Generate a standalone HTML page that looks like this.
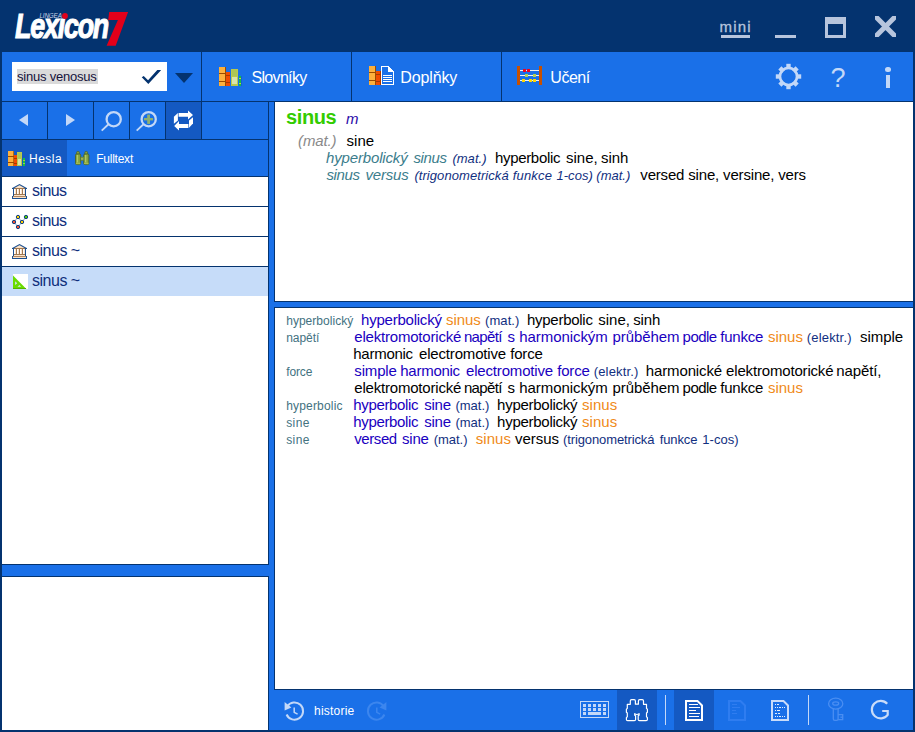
<!DOCTYPE html>
<html>
<head>
<meta charset="utf-8">
<title>Lingea Lexicon 7</title>
<style>
html,body{margin:0;padding:0;}
body{width:915px;height:732px;background:#04336f;position:relative;overflow:hidden;font-family:"Liberation Sans",sans-serif;}
.a{position:absolute;}
.blue{background:#1a70e8;}
.navy{background:#04336f;}
.white{background:#fff;}
.act{background:#1459c2;}
.t{position:absolute;white-space:nowrap;line-height:1;}
svg{position:absolute;overflow:visible;}
/* content text */
.ln{position:absolute;white-space:nowrap;font-size:15px;line-height:17px;height:17px;color:#000;}
.ln span{position:absolute;top:0;white-space:nowrap;}
.teal{color:#3b7d8c;font-style:italic;}
.dbi{color:#1f3d8f;font-style:italic;font-size:13px;}
.gri{color:#8a8a8a;font-style:italic;}
.lab{color:#4e7c8e;font-size:12px;}
.bl{color:#1a12b4;}
.or{color:#f08a18;}
.db{color:#1f3d8f;font-size:13px;}
</style>
</head>
<body>

<!-- ===== main blue surfaces ===== -->
<div class="a blue" style="left:2px;top:52px;width:911px;height:49px;"></div>
<div class="a blue" style="left:2px;top:102px;width:266px;height:37px;"></div>
<div class="a blue" style="left:2px;top:140px;width:266px;height:36px;"></div>
<div class="a blue" style="left:269px;top:102px;width:5px;height:628px;"></div>
<div class="a blue" style="left:2px;top:565px;width:270px;height:11px;"></div>
<div class="a blue" style="left:269px;top:302px;width:644px;height:5px;"></div>
<div class="a blue" style="left:269px;top:690px;width:644px;height:40px;"></div>

<!-- white panels -->
<div class="a white" style="left:2px;top:177px;width:266px;height:387px;"></div>
<div class="a white" style="left:2px;top:577px;width:266px;height:153px;"></div>
<div class="a white" style="left:275px;top:102px;width:638px;height:199px;"></div>
<div class="a white" style="left:275px;top:308px;width:638px;height:381px;"></div>

<!-- ===== title bar ===== -->
<div id="logo" class="t" style="left:15px;top:8.5px;font-size:35.5px;font-weight:bold;font-style:italic;color:#fff;letter-spacing:-1.6px;-webkit-text-stroke:1.1px #fff;transform:scaleX(0.757);transform-origin:0 0;">Lex&#305;con</div>
<svg style="left:0;top:0;" width="140" height="52">
  <polygon points="109.2,12 128.1,12 115.7,45.8 106.6,45.8 117.9,20 108.2,20" fill="#e2001a"/>
  <circle cx="65" cy="16" r="2.9" fill="#e2001a"/>
</svg>
<div class="t" style="left:39.5px;top:13px;font-size:6.3px;font-style:italic;color:#c8d2e6;letter-spacing:-0.15px;">LINGEA</div>

<div class="a" style="left:721px;top:35px;width:29px;height:3px;background:#b7c5dd;"></div>
<div class="a" style="left:775px;top:35px;width:21px;height:3px;background:#b7c5dd;"></div>
<div class="a" style="left:825px;top:17px;width:15px;height:11px;border:3px solid #b7c5dd;border-top-width:7px;"></div>
<svg style="left:875px;top:16px;overflow:hidden;" width="21" height="21" viewBox="0 0 21 21">
  <path d="M-3 -3 L24 24 M24 -3 L-3 24" stroke="#b7c5dd" stroke-width="5.1" fill="none"/>
</svg>

<!-- ===== toolbar row 1 ===== -->
<div class="a white" style="left:12px;top:62px;width:155px;height:29px;"></div>
<div class="a" style="left:17px;top:69px;width:81px;height:15px;background:#dadada;"></div>
<svg style="left:0;top:0;" width="170" height="100">
  <polygon points="141.75,77.3 148.3,84.1 161,70.3 160.8,69.9 157.3,69.9 148.05,80.2 143.7,76.05" fill="#04336f"/>
</svg>
<svg style="left:175px;top:73px;" width="18" height="10"><polygon points="0,0 18,0 9,10" fill="#04336f"/></svg>

<div class="a navy" style="left:201px;top:52px;width:1px;height:87px;"></div>
<div class="a navy" style="left:351px;top:52px;width:1px;height:49px;"></div>
<div class="a navy" style="left:501px;top:52px;width:1px;height:49px;"></div>
<div class="a navy" style="left:2px;top:101px;width:911px;height:1px;"></div>

<!-- Slovniky icon -->
<svg style="left:219px;top:66px;" width="24" height="21" shape-rendering="crispEdges">
  <rect x="0" y="1" width="7" height="19" fill="#fdb03c"/>
  <rect x="6" y="1" width="1" height="19" fill="#9b4a00"/>
  <rect x="0" y="7" width="7" height="1" fill="#9b4a00"/>
  <rect x="0" y="15" width="7" height="1" fill="#9b4a00"/>
  <rect x="7" y="6" width="4" height="14" fill="#f04c00"/>
  <rect x="7" y="9" width="4" height="1" fill="#a83800"/>
  <rect x="7" y="16" width="4" height="1" fill="#a83800"/>
  <rect x="12" y="3" width="7" height="17" fill="#b9c94c"/>
  <rect x="13" y="4" width="5" height="6" fill="#acc655"/>
  <rect x="13" y="11" width="5" height="7" fill="#d8e3ad"/>
  <rect x="20" y="10" width="2" height="10" fill="#12c046"/>
  <rect x="20" y="12" width="2" height="1" fill="#c8d040"/>
  <rect x="20" y="17" width="2" height="1" fill="#c8d040"/>
  <rect x="22" y="10" width="1" height="10" fill="#1560d8"/>
</svg>

<!-- Doplnky icon -->
<svg style="left:369px;top:66px;" width="26" height="20" shape-rendering="crispEdges">
  <rect x="0" y="0" width="7" height="19" fill="#fdb03c"/>
  <rect x="6" y="0" width="1" height="19" fill="#9b4a00"/>
  <rect x="0" y="6" width="7" height="1" fill="#9b4a00"/>
  <rect x="0" y="14" width="7" height="1" fill="#9b4a00"/>
  <rect x="7" y="5" width="5" height="14" fill="#f04c00"/>
  <rect x="7" y="8" width="5" height="1" fill="#a83800"/>
  <rect x="7" y="15" width="5" height="1" fill="#a83800"/>
  <rect x="11" y="5" width="1" height="14" fill="#a83800"/>
  <polygon points="12,0 19.5,0 25,5.5 25,19 12,19" fill="#fff"/>
  <polygon points="13,1 19,1 19,6 24,6 24,18 13,18" fill="#1a70e8"/>
  <rect x="14" y="9" width="9" height="1" fill="#fff"/>
  <rect x="14" y="11" width="9" height="1" fill="#fff"/>
  <rect x="14" y="13" width="9" height="1" fill="#fff"/>
  <rect x="14" y="15" width="9" height="1" fill="#fff"/>
</svg>

<!-- Uceni icon -->
<svg style="left:517px;top:66px;" width="26" height="20" shape-rendering="crispEdges">
  <rect x="3" y="4" width="19" height="1" fill="#f2f2f2"/>
  <rect x="3" y="9" width="19" height="1" fill="#f2f2f2"/>
  <rect x="3" y="14" width="19" height="1" fill="#f2f2f2"/>
  <rect x="0" y="0" width="3" height="19" fill="#c85000"/>
  <rect x="22" y="0" width="3" height="19" fill="#c85000"/>
  <rect x="6" y="3" width="3" height="3" fill="#f00020"/>
  <rect x="10" y="3" width="3" height="3" fill="#f00020"/>
  <rect x="8" y="8" width="3" height="3" fill="#b2d050"/>
  <rect x="16" y="8" width="3" height="3" fill="#b2d050"/>
  <rect x="5" y="13" width="3" height="3" fill="#ffd800"/>
  <rect x="12" y="13" width="3" height="3" fill="#ffd800"/>
  <rect x="16" y="13" width="3" height="3" fill="#ffd800"/>
</svg>

<!-- gear -->
<svg style="left:775px;top:63.4px;" width="27" height="27" viewBox="-13.5 -13.5 27 27">
  <g fill="#c3d8f8">
    <rect x="-2.2" y="-12.7" width="4.4" height="5"/>
    <rect x="-2.2" y="-12.2" width="4.4" height="5" transform="rotate(45)"/>
    <rect x="-2.2" y="-12.7" width="4.4" height="5" transform="rotate(90)"/>
    <rect x="-2.2" y="-12.2" width="4.4" height="5" transform="rotate(135)"/>
    <rect x="-2.2" y="-12.7" width="4.4" height="5" transform="rotate(180)"/>
    <rect x="-2.2" y="-12.2" width="4.4" height="5" transform="rotate(225)"/>
    <rect x="-2.2" y="-12.7" width="4.4" height="5" transform="rotate(270)"/>
    <rect x="-2.2" y="-12.2" width="4.4" height="5" transform="rotate(315)"/>
  </g>
  <circle cx="0" cy="0" r="8.55" fill="none" stroke="#c3d8f8" stroke-width="2.7"/>
</svg>
<div id="qm" class="t" style="left:829.8px;top:63.2px;font-size:28.5px;color:#c3d8f8;transform:scaleX(0.95);transform-origin:50% 50%;">?</div>
<div class="a" style="left:886px;top:75px;width:4px;height:13px;background:#c3d8f8;"></div>
<div class="a" style="left:885.3px;top:66.6px;width:5.4px;height:5.4px;border-radius:3px;background:#c3d8f8;"></div>

<!-- ===== toolbar row 2 (left) ===== -->
<div class="a act" style="left:166px;top:102px;width:35px;height:37px;"></div>
<div class="a navy" style="left:47px;top:102px;width:1px;height:37px;"></div>
<div class="a navy" style="left:93px;top:102px;width:1px;height:37px;"></div>
<div class="a navy" style="left:129px;top:102px;width:1px;height:37px;"></div>
<div class="a navy" style="left:165px;top:102px;width:1px;height:37px;"></div>
<div class="a navy" style="left:2px;top:139px;width:266px;height:1px;"></div>
<svg style="left:0;top:0;" width="210" height="140">
  <polygon points="19,120 28,114 28,126" fill="#c3d8f8"/>
  <polygon points="75,120 66,114 66,126" fill="#c3d8f8"/>
  <circle cx="113.7" cy="119.2" r="7.1" fill="none" stroke="#c3d8f8" stroke-width="2.3"/>
  <line x1="108.2" y1="124.5" x2="101.7" y2="130.6" stroke="#c3d8f8" stroke-width="1.8"/>
  <circle cx="148.7" cy="119.2" r="7.1" fill="none" stroke="#c3d8f8" stroke-width="2.3"/>
  <line x1="143.2" y1="124.5" x2="136.7" y2="130.6" stroke="#c3d8f8" stroke-width="1.8"/>
  <rect x="147.2" y="114.6" width="2.8" height="9.3" fill="#8fb070"/>
  <rect x="144" y="118" width="9" height="2.4" fill="#8fb070"/>
  <g fill="#fff">
    <polygon points="178.6,113 188,113 188,110.4 193,115 188,119.6 188,116.8 178.6,116.8"/>
    <polygon points="177.9,113 177.9,120.4 173.9,123.8 173.9,116.8"/>
    <polygon points="188.4,124 179,124 179,121 174.2,126 179,130.6 179,128 188.4,128"/>
    <polygon points="189,120.6 189,127.8 193,123.6 193,117.2"/>
  </g>
</svg>

<!-- tabs -->
<div class="a act" style="left:2px;top:140px;width:65px;height:36px;"></div>
<div class="a navy" style="left:2px;top:176px;width:266px;height:1px;"></div>
<svg style="left:8px;top:151px;" width="18" height="16" shape-rendering="crispEdges">
  <rect x="0" y="0" width="6" height="15" fill="#fdb03c"/>
  <rect x="5" y="0" width="1" height="15" fill="#b86a10"/>
  <rect x="0" y="5" width="6" height="1" fill="#9b4a00"/>
  <rect x="0" y="11" width="6" height="1" fill="#9b4a00"/>
  <rect x="6" y="4" width="3" height="11" fill="#f04c00"/>
  <rect x="6" y="7" width="3" height="1" fill="#a83800"/>
  <rect x="6" y="12" width="3" height="1" fill="#a83800"/>
  <rect x="9" y="1" width="5" height="14" fill="#b9c94c"/>
  <rect x="10" y="2" width="3" height="5" fill="#acc655"/>
  <rect x="10" y="8" width="3" height="6" fill="#d8e3ad"/>
  <rect x="15" y="7" width="2" height="8" fill="#12c046"/>
  <rect x="15" y="9" width="2" height="1" fill="#9ad040"/>
  <rect x="15" y="12" width="2" height="1" fill="#9ad040"/>
</svg>
<svg style="left:75px;top:151px;" width="15" height="15">
  <rect x="1.6" y="0.4" width="2.8" height="3.4" rx="1.2" fill="#86a03c" stroke="#46622a" stroke-width="0.7"/>
  <rect x="9.8" y="0.4" width="2.8" height="3.4" rx="1.2" fill="#86a03c" stroke="#46622a" stroke-width="0.7"/>
  <rect x="0.5" y="3" width="5.2" height="10.6" rx="1.3" fill="#86a23e" stroke="#46622a" stroke-width="0.9"/>
  <rect x="8.7" y="3" width="5.2" height="10.6" rx="1.3" fill="#86a23e" stroke="#46622a" stroke-width="0.9"/>
  <rect x="1.8" y="4" width="1.3" height="7.4" fill="#b0c864"/>
  <rect x="10" y="4" width="1.3" height="7.4" fill="#b0c864"/>
  <rect x="0.9" y="11.7" width="4.4" height="1.5" fill="#a2ba52"/>
  <rect x="9.1" y="11.7" width="4.4" height="1.5" fill="#a2ba52"/>
  <rect x="5.9" y="5.9" width="2.6" height="3.5" fill="#9cb452"/>
  <rect x="5.9" y="5.9" width="2.6" height="0.7" fill="#5a7630"/>
  <rect x="5.9" y="8.9" width="2.6" height="0.7" fill="#5a7630"/>
</svg>

<!-- list -->
<div class="a navy" style="left:2px;top:206px;width:266px;height:1px;"></div>
<div class="a navy" style="left:2px;top:236px;width:266px;height:1px;"></div>
<div class="a navy" style="left:2px;top:266px;width:266px;height:1px;"></div>
<div class="a" style="left:2px;top:267px;width:266px;height:29px;background:#c6dcf9;"></div>

<svg id="mus1" style="left:12px;top:184px;" width="15" height="15" shape-rendering="crispEdges">
  <polygon points="7.5,0.5 14,4.5 1,4.5" fill="#fbe0c4"/>
  <rect x="2" y="5" width="11" height="7" fill="#fbe3cc"/>
  <rect x="5" y="5" width="1" height="5" fill="#fff"/><rect x="8" y="5" width="1" height="5" fill="#fff"/><rect x="11" y="5" width="1" height="5" fill="#fff"/><rect x="2" y="5" width="1" height="5" fill="#fff"/>
  <rect x="2" y="4" width="11" height="1" fill="#a07850"/>
  <rect x="4" y="5" width="1" height="5" fill="#a07850"/>
  <rect x="7" y="5" width="1" height="5" fill="#a07850"/>
  <rect x="10" y="5" width="1" height="5" fill="#a07850"/>
  <rect x="2" y="10" width="11" height="1" fill="#a07850"/>
  <rect x="1" y="12" width="13" height="2" fill="#fbe0c4"/>
  <rect x="1" y="12" width="13" height="1" fill="#b08860"/>
  <rect x="1" y="4" width="1" height="8" fill="#1a4f90"/>
  <rect x="13" y="4" width="1" height="8" fill="#1a4f90"/>
  <rect x="0" y="4" width="2" height="1" fill="#1a4f90"/>
  <rect x="13" y="4" width="2" height="1" fill="#1a4f90"/>
  <rect x="0" y="12" width="1" height="3" fill="#1a4f90"/>
  <rect x="14" y="12" width="1" height="3" fill="#1a4f90"/>
  <rect x="0" y="14" width="15" height="1" fill="#1a4f90"/>
  <g shape-rendering="auto"><polyline points="0.5,4.5 7.5,0.6 14.5,4.5" fill="none" stroke="#1a4f90" stroke-width="1.1"/></g>
</svg>

<svg style="left:11px;top:214px;" width="20" height="18">
  <g fill="none" stroke="#8aa0c0" stroke-width="1">
    <line x1="7" y1="3" x2="3" y2="8"/><line x1="7" y1="3" x2="11" y2="8"/>
    <line x1="3" y1="8" x2="7" y2="13"/><line x1="11" y1="8" x2="7" y2="13"/>
    <line x1="11" y1="8" x2="15" y2="3"/>
  </g>
  <circle cx="7" cy="3" r="1.7" fill="#ffd000" stroke="#0e3f82" stroke-width="1"/>
  <circle cx="15" cy="3" r="1.7" fill="#58d000" stroke="#0e3f82" stroke-width="1"/>
  <circle cx="3" cy="8" r="1.7" fill="#f05030" stroke="#0e3f82" stroke-width="1"/>
  <circle cx="11" cy="8" r="1.7" fill="#ffd000" stroke="#0e3f82" stroke-width="1"/>
  <circle cx="7" cy="13" r="1.7" fill="#f05030" stroke="#0e3f82" stroke-width="1"/>
</svg>

<svg id="mus2" style="left:12px;top:244px;" width="15" height="15" shape-rendering="crispEdges">
  <polygon points="7.5,0.5 14,4.5 1,4.5" fill="#fbe0c4"/>
  <rect x="2" y="5" width="11" height="7" fill="#fbe3cc"/>
  <rect x="5" y="5" width="1" height="5" fill="#fff"/><rect x="8" y="5" width="1" height="5" fill="#fff"/><rect x="11" y="5" width="1" height="5" fill="#fff"/><rect x="2" y="5" width="1" height="5" fill="#fff"/>
  <rect x="2" y="4" width="11" height="1" fill="#a07850"/>
  <rect x="4" y="5" width="1" height="5" fill="#a07850"/>
  <rect x="7" y="5" width="1" height="5" fill="#a07850"/>
  <rect x="10" y="5" width="1" height="5" fill="#a07850"/>
  <rect x="2" y="10" width="11" height="1" fill="#a07850"/>
  <rect x="1" y="12" width="13" height="2" fill="#fbe0c4"/>
  <rect x="1" y="12" width="13" height="1" fill="#b08860"/>
  <rect x="1" y="4" width="1" height="8" fill="#1a4f90"/>
  <rect x="13" y="4" width="1" height="8" fill="#1a4f90"/>
  <rect x="0" y="4" width="2" height="1" fill="#1a4f90"/>
  <rect x="13" y="4" width="2" height="1" fill="#1a4f90"/>
  <rect x="0" y="12" width="1" height="3" fill="#1a4f90"/>
  <rect x="14" y="12" width="1" height="3" fill="#1a4f90"/>
  <rect x="0" y="14" width="15" height="1" fill="#1a4f90"/>
  <g shape-rendering="auto"><polyline points="0.5,4.5 7.5,0.6 14.5,4.5" fill="none" stroke="#1a4f90" stroke-width="1.1"/></g>
</svg>

<svg style="left:13px;top:274px;" width="15" height="15">
  <rect x="0" y="0" width="15" height="15" fill="#fff"/>
  <polygon points="0,1.6 0,15 13.4,15" fill="#6adc00"/>
  <rect x="0" y="14" width="13" height="1" fill="#55b400"/>
  <polygon points="2.2,7.2 2.2,11 4.2,9.2" fill="#d8e6f8"/>
  <polygon points="4.6,12.8 8,12.8 6.4,11" fill="#d8e6f8"/>
</svg>

<!-- left panel borders -->
<div class="a navy" style="left:2px;top:564px;width:266px;height:1px;"></div>
<div class="a navy" style="left:2px;top:576px;width:266px;height:1px;"></div>
<div class="a navy" style="left:268px;top:102px;width:1px;height:463px;"></div>
<div class="a navy" style="left:268px;top:576px;width:1px;height:154px;"></div>

<!-- right panel borders -->
<div class="a navy" style="left:274px;top:102px;width:1px;height:200px;"></div>
<div class="a navy" style="left:274px;top:301px;width:639px;height:1px;"></div>
<div class="a navy" style="left:274px;top:307px;width:639px;height:1px;"></div>
<div class="a navy" style="left:274px;top:307px;width:1px;height:383px;"></div>
<div class="a navy" style="left:274px;top:689px;width:639px;height:1px;"></div>

<!-- ===== entry panel ===== -->


<!-- ===== results panel ===== -->

<!-- ===== bottom toolbar ===== -->
<div class="a act" style="left:617px;top:690px;width:40px;height:40px;"></div>
<div class="a act" style="left:674px;top:690px;width:40px;height:40px;"></div>
<div class="a" style="left:665px;top:695px;width:1px;height:30px;background:#c3d8f8;"></div>
<div class="a" style="left:808px;top:695px;width:1px;height:30px;background:#c3d8f8;"></div>

<svg style="left:269.6px;top:691px;" width="644" height="40">
  <!-- history (x offset 269) -->
  <g fill="none" stroke="#c3d8f8" stroke-width="2">
    <path d="M 17.2 15.5 A 8.6 8.6 0 1 1 16.6 23.5"/>
    <polyline points="24.2,16.6 24.2,21.4 27.6,23.2" stroke-width="1.5"/>
  </g>
  <polygon points="14.6,11 21.4,16.4 14.6,19.6" fill="#c3d8f8"/>
  <g fill="none" stroke="#3c86ee" stroke-width="2">
    <path d="M 113.8 15.5 A 8.6 8.6 0 1 0 114.4 23.5"/>
    <polyline points="106.8,16.6 106.8,21.4 110.2,23.2" stroke-width="1.5"/>
  </g>
  <polygon points="116.4,11 109.6,16.4 116.4,19.6" fill="#3c86ee"/>
</svg>

<!-- keyboard -->
<svg style="left:580px;top:701px;" width="30" height="18" shape-rendering="crispEdges">
  <rect x="0.5" y="0.5" width="28" height="16" fill="none" stroke="#c3d8f8" stroke-width="1"/>
  <g fill="#c3d8f8">
    <rect x="3" y="3" width="3" height="3"/><rect x="8" y="3" width="3" height="3"/><rect x="13" y="3" width="3" height="3"/><rect x="18" y="3" width="3" height="3"/><rect x="23" y="3" width="3" height="3"/>
    <rect x="3" y="7" width="3" height="3"/><rect x="8" y="7" width="3" height="3"/><rect x="13" y="7" width="3" height="3"/><rect x="18" y="7" width="3" height="3"/><rect x="23" y="7" width="3" height="3"/>
    <rect x="3" y="11" width="3" height="3"/><rect x="8" y="11" width="13" height="3"/><rect x="23" y="11" width="3" height="3"/>
  </g>
</svg>

<!-- binoculars outline -->
<svg style="left:620px;top:694px;" width="36" height="32" viewBox="620 694 36 32">
  <path d="M630.3 704.3 V701 Q630.3 699.7 631.6 699.7 H634.1 Q635.4 699.7 635.4 701 V704.2 H638.4 V701 Q638.4 699.7 639.7 699.7 H642.2 Q643.5 699.7 643.5 701 V704.3 H646.5 V708.4 L647.4 709.2 V712.2 L646.5 713 V716.8 L647.4 717.6 V719.4 Q647.4 720.6 646.1 720.6 H639.5 Q638.2 720.6 638.2 719.4 V715.8 L639.1 715.2 V713.6 Q636.9 715.4 634.7 713.6 V715.2 L635.6 715.8 V719.4 Q635.6 720.6 634.3 720.6 H627.7 Q626.4 720.6 626.4 719.4 V717.6 L627.3 716.8 V713 L626.4 712.2 V709.2 L627.3 708.4 V704.3 Z" fill="none" stroke="#fff" stroke-width="1.2" stroke-linejoin="round"/>
</svg>

<!-- doc icons -->
<svg style="left:685px;top:700px;" width="18" height="21" shape-rendering="crispEdges">
  <g shape-rendering="auto"><polygon points="1,1 12.5,1 17,5.5 17,20 1,20" fill="none" stroke="#fff" stroke-width="2"/></g>
  <g fill="#fff">
    <rect x="4" y="4" width="9" height="1"/><rect x="4" y="7" width="11" height="1"/><rect x="4" y="10" width="7" height="1"/><rect x="4" y="13" width="11" height="1"/><rect x="4" y="16" width="10" height="1"/>
  </g>
</svg>
<svg style="left:728px;top:700px;" width="18" height="21" shape-rendering="crispEdges">
  <g shape-rendering="auto"><polygon points="1,1 12.5,1 17,5.5 17,20 1,20" fill="none" stroke="#2f7df0" stroke-width="2"/></g>
  <g fill="#2f7df0">
    <rect x="4" y="4" width="5" height="1"/><rect x="4" y="7" width="8" height="1"/><rect x="4" y="10" width="4" height="1"/><rect x="4" y="13" width="5" height="1"/>
  </g>
</svg>
<svg style="left:771px;top:700px;" width="18" height="21" shape-rendering="crispEdges">
  <g shape-rendering="auto"><polygon points="1,1 12.5,1 17,5.5 17,20 1,20" fill="none" stroke="#c9dcfa" stroke-width="2"/></g>
  <g fill="#e4eefc">
    <rect x="4" y="4" width="1" height="1"/><rect x="6" y="4" width="2" height="1"/>
    <rect x="4" y="7" width="1" height="1"/><rect x="6" y="7" width="1" height="1"/><rect x="8" y="7" width="2" height="1"/><rect x="11" y="7" width="1" height="1"/><rect x="13" y="7" width="1" height="1"/>
    <rect x="4" y="10" width="1" height="1"/><rect x="6" y="10" width="3" height="1"/>
    <rect x="4" y="13" width="2" height="1"/><rect x="7" y="13" width="2" height="1"/>
    <rect x="4" y="16" width="1" height="1"/><rect x="6" y="16" width="1" height="1"/><rect x="8" y="16" width="2" height="1"/><rect x="11" y="16" width="1" height="1"/><rect x="13" y="16" width="1" height="1"/>
  </g>
</svg>

<!-- key (faded) -->
<svg style="left:826px;top:696px;" width="20" height="28">
  <g fill="none" stroke="#4a8ef2" stroke-width="1.3">
    <ellipse cx="9.7" cy="7.7" rx="7.1" ry="5.5"/>
    <ellipse cx="9.7" cy="7.5" rx="3" ry="1.7"/>
    <path d="M7.3 12.8 V23 q0 1.4 1.5 1.4 h1.8 q1.5 0 1.5 -1.4 V12.8"/>
    <path d="M12.1 18.7 h4.6 v5 h-4.6"/>
    <path d="M14.4 21.2 h2.3"/>
  </g>
</svg>

<!-- G -->
<svg style="left:860px;top:690px;" width="40" height="40" viewBox="860 690 40 40">
  <path d="M887.2 703.7 A8.8 8.8 0 1 0 887.7 714.9 V711 H882.2" fill="none" stroke="#c9dcf9" stroke-width="2.2"/>
</svg>

<div class="t" style="left:719.60px;top:19.00px;font-size:15px;color:#b7c5dd;letter-spacing:1.143px;-webkit-text-stroke:0.3px #b7c5dd;">mini</div>
<div class="t" style="left:17.10px;top:70.00px;font-size:13px;color:#15123a;letter-spacing:-0.232px;">sinus venosus</div>
<div class="t" style="left:251.50px;top:70.00px;font-size:16px;color:#fff;letter-spacing:-0.681px;">Slovníky</div>
<div class="t" style="left:400.30px;top:70.00px;font-size:16px;color:#fff;letter-spacing:-0.134px;">Doplňky</div>
<div class="t" style="left:550.30px;top:70.00px;font-size:16px;color:#fff;letter-spacing:-0.463px;">Učení</div>
<div class="t" style="left:29.00px;top:153.00px;font-size:12px;color:#fff;letter-spacing:0.474px;">Hesla</div>
<div class="t" style="left:96.20px;top:153.00px;font-size:12px;color:#fff;letter-spacing:-0.235px;">Fulltext</div>
<div class="t" style="left:32.10px;top:183.00px;font-size:16px;color:#0f2f7c;letter-spacing:-0.588px;">sinus</div>
<div class="t" style="left:32.10px;top:213.00px;font-size:16px;color:#0f2f7c;letter-spacing:-0.588px;">sinus</div>
<div class="t" style="left:32.10px;top:243.00px;font-size:16px;color:#0f2f7c;letter-spacing:-0.516px;">sinus ~</div>
<div class="t" style="left:32.10px;top:273.00px;font-size:16px;color:#0f2f7c;letter-spacing:-0.516px;">sinus ~</div>
<div class="t" style="left:314.10px;top:705.00px;font-size:12px;color:#fff;letter-spacing:0.213px;">historie</div>
<div class="t" style="left:286.00px;top:107.00px;font-size:20px;color:#33cc00;font-weight:bold;letter-spacing:-0.378px;">sinus</div>
<div class="t" style="left:346.00px;top:111.00px;font-size:15px;color:#2a0aa8;font-style:italic;">m</div>
<div class="t" style="left:298.10px;top:133.00px;font-size:15px;color:#8a8a8a;font-style:italic;letter-spacing:-0.133px;">(mat.)</div>
<div class="t" style="left:346.60px;top:133.00px;font-size:15px;color:#000;letter-spacing:0.008px;">sine</div>
<div class="t" style="left:326.10px;top:150.00px;font-size:15px;color:#3b7d8c;font-style:italic;letter-spacing:-0.161px;">hyperbolický</div>
<div class="t" style="left:413.50px;top:150.00px;font-size:15px;color:#3b7d8c;font-style:italic;letter-spacing:-0.404px;">sinus</div>
<div class="t" style="left:452.40px;top:152.00px;font-size:13px;color:#112f80;font-style:italic;letter-spacing:0.038px;">(mat.)</div>
<div class="t" style="left:495.00px;top:150.00px;font-size:15px;color:#000;letter-spacing:-0.330px;">hyperbolic</div>
<div class="t" style="left:566.10px;top:150.00px;font-size:15px;color:#000;letter-spacing:-0.029px;">sine,</div>
<div class="t" style="left:601.10px;top:150.00px;font-size:15px;color:#000;letter-spacing:-0.092px;">sinh</div>
<div class="t" style="left:326.50px;top:167.00px;font-size:15px;color:#3b7d8c;font-style:italic;letter-spacing:-0.404px;">sinus</div>
<div class="t" style="left:365.40px;top:167.00px;font-size:15px;color:#3b7d8c;font-style:italic;letter-spacing:-0.156px;">versus</div>
<div class="t" style="left:414.40px;top:169.00px;font-size:13px;color:#112f80;font-style:italic;letter-spacing:0.069px;">(trigonometrická</div>
<div class="t" style="left:512.70px;top:169.00px;font-size:13px;color:#112f80;font-style:italic;letter-spacing:0.186px;">funkce</div>
<div class="t" style="left:556.40px;top:169.00px;font-size:13px;color:#112f80;font-style:italic;letter-spacing:0.062px;">1-cos)</div>
<div class="t" style="left:596.30px;top:169.00px;font-size:13px;color:#112f80;font-style:italic;letter-spacing:0.018px;">(mat.)</div>
<div class="t" style="left:640.30px;top:167.00px;font-size:15px;color:#000;letter-spacing:-0.171px;">versed sine, versine, vers</div>
<div class="t" style="left:286.20px;top:315.00px;font-size:12px;color:#43727f;letter-spacing:0.028px;">hyperbolický</div>
<div class="t" style="left:361.10px;top:312.00px;font-size:15px;color:#1a00c0;letter-spacing:-0.234px;">hyperbolický</div>
<div class="t" style="left:446.10px;top:312.00px;font-size:15px;color:#f08a18;letter-spacing:-0.079px;">sinus</div>
<div class="t" style="left:485.10px;top:314.00px;font-size:13px;color:#112f80;letter-spacing:0.058px;">(mat.)</div>
<div class="t" style="left:527.00px;top:312.00px;font-size:15px;color:#000;letter-spacing:-0.275px;">hyperbolic</div>
<div class="t" style="left:598.20px;top:312.00px;font-size:15px;color:#000;letter-spacing:0.021px;">sine,</div>
<div class="t" style="left:633.20px;top:312.00px;font-size:15px;color:#000;letter-spacing:-0.158px;">sinh</div>
<div class="t" style="left:286.20px;top:332.00px;font-size:12px;color:#43727f;letter-spacing:-0.046px;">napětí</div>
<div class="t" style="left:354.30px;top:329.00px;font-size:15px;color:#1a00c0;letter-spacing:-0.200px;">elektromotorické</div>
<div class="t" style="left:463.90px;top:329.00px;font-size:15px;color:#1a00c0;letter-spacing:-0.647px;">napětí</div>
<div class="t" style="left:507.50px;top:329.00px;font-size:15px;color:#1a00c0;">s</div>
<div class="t" style="left:519.30px;top:329.00px;font-size:15px;color:#1a00c0;letter-spacing:-0.069px;">harmonickým</div>
<div class="t" style="left:612.50px;top:329.00px;font-size:15px;color:#1a00c0;letter-spacing:-0.078px;">průběhem</div>
<div class="t" style="left:682.60px;top:329.00px;font-size:15px;color:#1a00c0;letter-spacing:-0.540px;">podle</div>
<div class="t" style="left:720.20px;top:329.00px;font-size:15px;color:#1a00c0;letter-spacing:-0.190px;">funkce</div>
<div class="t" style="left:767.90px;top:329.00px;font-size:15px;color:#f08a18;">sinus</div>
<div class="t" style="left:806.80px;top:331.00px;font-size:13px;color:#112f80;letter-spacing:0.173px;">(elektr.)</div>
<div class="t" style="left:860.10px;top:329.00px;font-size:15px;color:#000;letter-spacing:-0.080px;">simple</div>
<div class="t" style="left:353.30px;top:346.00px;font-size:15px;color:#000;letter-spacing:-0.270px;">harmonic</div>
<div class="t" style="left:419.00px;top:346.00px;font-size:15px;color:#000;letter-spacing:-0.172px;">electromotive</div>
<div class="t" style="left:510.20px;top:346.00px;font-size:15px;color:#000;letter-spacing:-0.176px;">force</div>
<div class="t" style="left:286.20px;top:366.00px;font-size:12px;color:#43727f;letter-spacing:-0.126px;">force</div>
<div class="t" style="left:354.30px;top:363.00px;font-size:15px;color:#1a00c0;letter-spacing:-0.160px;">simple</div>
<div class="t" style="left:400.30px;top:363.00px;font-size:15px;color:#1a00c0;letter-spacing:-0.270px;">harmonic</div>
<div class="t" style="left:466.00px;top:363.00px;font-size:15px;color:#1a00c0;letter-spacing:-0.172px;">electromotive</div>
<div class="t" style="left:557.20px;top:363.00px;font-size:15px;color:#1a00c0;letter-spacing:-0.176px;">force</div>
<div class="t" style="left:593.70px;top:365.00px;font-size:13px;color:#112f80;letter-spacing:0.173px;">(elektr.)</div>
<div class="t" style="left:645.80px;top:363.00px;font-size:15px;color:#000;letter-spacing:-0.132px;">harmonické</div>
<div class="t" style="left:726.10px;top:363.00px;font-size:15px;color:#000;letter-spacing:-0.173px;">elektromotorické</div>
<div class="t" style="left:836.30px;top:363.00px;font-size:15px;color:#000;letter-spacing:-0.134px;">napětí,</div>
<div class="t" style="left:354.30px;top:380.00px;font-size:15px;color:#000;letter-spacing:-0.200px;">elektromotorické</div>
<div class="t" style="left:463.90px;top:380.00px;font-size:15px;color:#000;letter-spacing:-0.647px;">napětí</div>
<div class="t" style="left:507.50px;top:380.00px;font-size:15px;color:#000;">s</div>
<div class="t" style="left:519.30px;top:380.00px;font-size:15px;color:#000;letter-spacing:-0.069px;">harmonickým</div>
<div class="t" style="left:612.50px;top:380.00px;font-size:15px;color:#000;letter-spacing:-0.078px;">průběhem</div>
<div class="t" style="left:682.60px;top:380.00px;font-size:15px;color:#000;letter-spacing:-0.540px;">podle</div>
<div class="t" style="left:720.20px;top:380.00px;font-size:15px;color:#000;letter-spacing:-0.190px;">funkce</div>
<div class="t" style="left:767.90px;top:380.00px;font-size:15px;color:#f08a18;">sinus</div>
<div class="t" style="left:286.20px;top:400.00px;font-size:12px;color:#43727f;letter-spacing:0.178px;">hyperbolic</div>
<div class="t" style="left:353.30px;top:397.00px;font-size:15px;color:#1a00c0;letter-spacing:-0.341px;">hyperbolic</div>
<div class="t" style="left:424.30px;top:397.00px;font-size:15px;color:#1a00c0;letter-spacing:-0.258px;">sine</div>
<div class="t" style="left:455.50px;top:399.00px;font-size:13px;color:#112f80;letter-spacing:-0.022px;">(mat.)</div>
<div class="t" style="left:497.10px;top:397.00px;font-size:15px;color:#000;letter-spacing:-0.270px;">hyperbolický</div>
<div class="t" style="left:582.10px;top:397.00px;font-size:15px;color:#f08a18;letter-spacing:0.021px;">sinus</div>
<div class="t" style="left:286.20px;top:417.00px;font-size:12px;color:#43727f;letter-spacing:0.420px;">sine</div>
<div class="t" style="left:353.30px;top:414.00px;font-size:15px;color:#1a00c0;letter-spacing:-0.341px;">hyperbolic</div>
<div class="t" style="left:424.30px;top:414.00px;font-size:15px;color:#1a00c0;letter-spacing:-0.258px;">sine</div>
<div class="t" style="left:455.50px;top:416.00px;font-size:13px;color:#112f80;letter-spacing:-0.022px;">(mat.)</div>
<div class="t" style="left:497.10px;top:414.00px;font-size:15px;color:#000;letter-spacing:-0.270px;">hyperbolický</div>
<div class="t" style="left:582.10px;top:414.00px;font-size:15px;color:#f08a18;letter-spacing:0.021px;">sinus</div>
<div class="t" style="left:286.20px;top:434.00px;font-size:12px;color:#43727f;letter-spacing:0.420px;">sine</div>
<div class="t" style="left:354.30px;top:431.00px;font-size:15px;color:#1a00c0;letter-spacing:-0.436px;">versed</div>
<div class="t" style="left:402.00px;top:431.00px;font-size:15px;color:#1a00c0;letter-spacing:-0.225px;">sine</div>
<div class="t" style="left:433.70px;top:433.00px;font-size:13px;color:#112f80;letter-spacing:-0.022px;">(mat.)</div>
<div class="t" style="left:475.80px;top:431.00px;font-size:15px;color:#f08a18;letter-spacing:0.021px;">sinus</div>
<div class="t" style="left:515.00px;top:431.00px;font-size:15px;color:#000;letter-spacing:-0.016px;">versus</div>
<div class="t" style="left:563.10px;top:433.00px;font-size:13px;color:#112f80;letter-spacing:-0.124px;">(trigonometrická</div>
<div class="t" style="left:659.70px;top:433.00px;font-size:13px;color:#112f80;letter-spacing:-0.114px;">funkce</div>
<div class="t" style="left:702.30px;top:433.00px;font-size:13px;color:#112f80;letter-spacing:0.022px;">1-cos)</div>
</body>
</html>
